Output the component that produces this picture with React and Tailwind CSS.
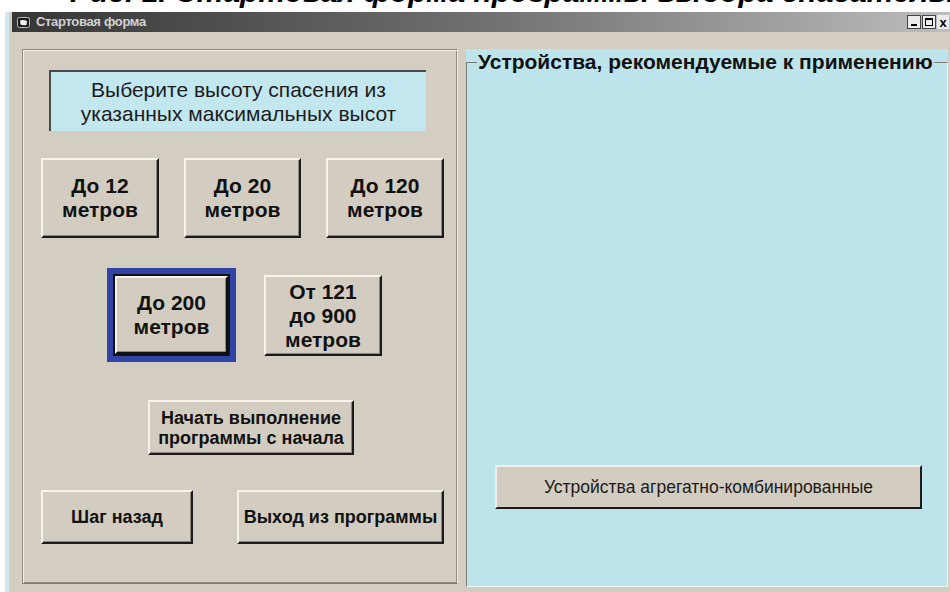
import React from 'react'

// Raised Win9x-style push button
function WinButton({ className = '', children }) {
  return (
    <div
      className={`flex items-center justify-center text-center font-bold text-[#111] bg-[#d3cdc1] border-2 border-t-[#f6f3ec] border-l-[#f6f3ec] border-r-[#1b1b1b] border-b-[#1b1b1b] shadow-[inset_-1px_-1px_0_#8d877d] ${className}`}
    >
      {children}
    </div>
  )
}

function TitleBar() {
  return (
    <div className="h-[20px] flex items-center bg-gradient-to-r from-[#363636] via-[#707070] to-[#bdbdbd] pl-[5px] pr-[1px]">
      {/* app icon */}
      <svg width="13" height="11" viewBox="0 0 13 11" className="mr-[6px]">
        <rect x="0.5" y="0.5" width="12" height="10" rx="2" fill="#1d1d1d" stroke="#bbb" />
        <path d="M3 3.5 Q6 2.5 10 4 L9.5 8 Q6 8.5 3.5 7.5 Z" fill="#f2f2f2" />
      </svg>
      <span className="text-[13px] font-bold text-[#d2d2d2] tracking-tight">Стартовая форма</span>
      <div className="ml-auto flex items-center gap-[1px]">
        <div className="w-[14px] h-[14px] bg-[#ececec] border border-[#444] flex items-end justify-center pb-[2px]">
          <div className="w-[6px] h-[2px] bg-black" />
        </div>
        <div className="w-[14px] h-[14px] bg-[#ececec] border border-[#444] flex items-center justify-center">
          <div className="w-[8px] h-[8px] border border-black border-t-2" />
        </div>
        <div className="w-[12px] h-[14px] bg-[#ececec] flex items-center justify-center text-[13px] font-bold leading-none text-black">x</div>
      </div>
    </div>
  )
}

function HeightPanel() {
  return (
    <div className="w-[436px] h-[535px] border border-t-[#8f897f] border-l-[#8f897f] border-r-[#f3efe8] border-b-[#7e786f] shadow-[inset_1px_1px_0_#f3efe8,inset_-1px_-1px_0_#8f897f] flex flex-col">
      {/* prompt label */}
      <div className="ml-[26px] mt-[20px] w-[377px] h-[61px] bg-[#c2e7ef] border-t-2 border-l-2 border-[#4a4a4a] flex flex-col items-center justify-center text-[21px] leading-[24px] text-[#1c1c1c]">
        <span>Выберите высоту спасения из</span>
        <span>указанных максимальных высот</span>
      </div>

      <div className="ml-[18px] mt-[27px] flex gap-[25px] text-[21px] leading-[24px]">
        <WinButton className="w-[118px] h-[80px]">До 12<br />метров</WinButton>
        <WinButton className="w-[117px] h-[80px]">До 20<br />метров</WinButton>
        <WinButton className="w-[118px] h-[80px]">До 120<br />метров</WinButton>
      </div>

      <div className="mt-[30px] flex items-start text-[21px] leading-[24px]">
        {/* focused button */}
        <div className="ml-[84px] w-[129px] h-[94px] border-[6px] border-[#3044a8] bg-[#121212] p-[2px] flex">
          <WinButton className="flex-1 border-r-[#111] border-b-[#111]">До 200<br />метров</WinButton>
        </div>
        <WinButton className="ml-[28px] mt-[7px] w-[118px] h-[81px]">От 121<br />до 900<br />метров</WinButton>
      </div>

      <WinButton className="ml-[125px] mt-[38px] w-[206px] h-[55px] text-[18px] leading-[20px]">
        Начать выполнение<br />программы с начала
      </WinButton>

      <div className="ml-[18px] mt-[35px] flex gap-[44px] text-[18px]">
        <WinButton className="w-[152px] h-[54px]">Шаг назад</WinButton>
        <WinButton className="w-[207px] h-[54px]">Выход из программы</WinButton>
      </div>
    </div>
  )
}

function DevicesPanel() {
  return (
    <div className="flex-1 h-[538px] bg-[#bde4eb] pt-[2px]">
      <fieldset className="h-full border border-t-[#7a7a7a] border-l-[#7a7a7a] border-r-[#e8f6f8] border-b-[#e8f6f8] pl-[10px] pr-[2px]">
        <legend className="text-[21px] font-bold text-[#111] leading-[22px] px-[1px] whitespace-nowrap">
          Устройства, рекомендуемые к применению
        </legend>
        <div className="pl-[18px] pt-[392px]">
          <div className="w-[427px] h-[44px] flex items-center justify-center text-[17.5px] text-[#1a1a1a] bg-[#d3cdc1] border-2 border-t-[#f2efe8] border-l-[#f2efe8] border-r-[#1b1b1b] border-b-[#1b1b1b]">
            Устройства агрегатно-комбинированные
          </div>
        </div>
      </fieldset>
    </div>
  )
}

export default function App() {
  return (
    <div className="w-[950px] h-[592px] bg-white overflow-hidden flex flex-col font-['Liberation_Sans',Arial,sans-serif]">
      {/* caption line above the window, only its lower edge shows */}
      <div className="h-[12px] overflow-hidden">
        <div className="-mt-[25px] pl-[70px] whitespace-nowrap text-[30px] font-bold italic text-black leading-[34px]">
          Рис. 1. Стартовая форма программы выбора спасательных устройств
        </div>
      </div>

      <div className="flex-1 ml-[5px] border-l-[4px] border-[#cfe9ee] bg-[#d4cec2] flex flex-col">
        <div className="ml-[3px]">
          <TitleBar />
        </div>
        <div className="flex mt-[17px] pl-[13px] pr-[2px] gap-[8px]">
          <HeightPanel />
          <DevicesPanel />
        </div>
      </div>
    </div>
  )
}
